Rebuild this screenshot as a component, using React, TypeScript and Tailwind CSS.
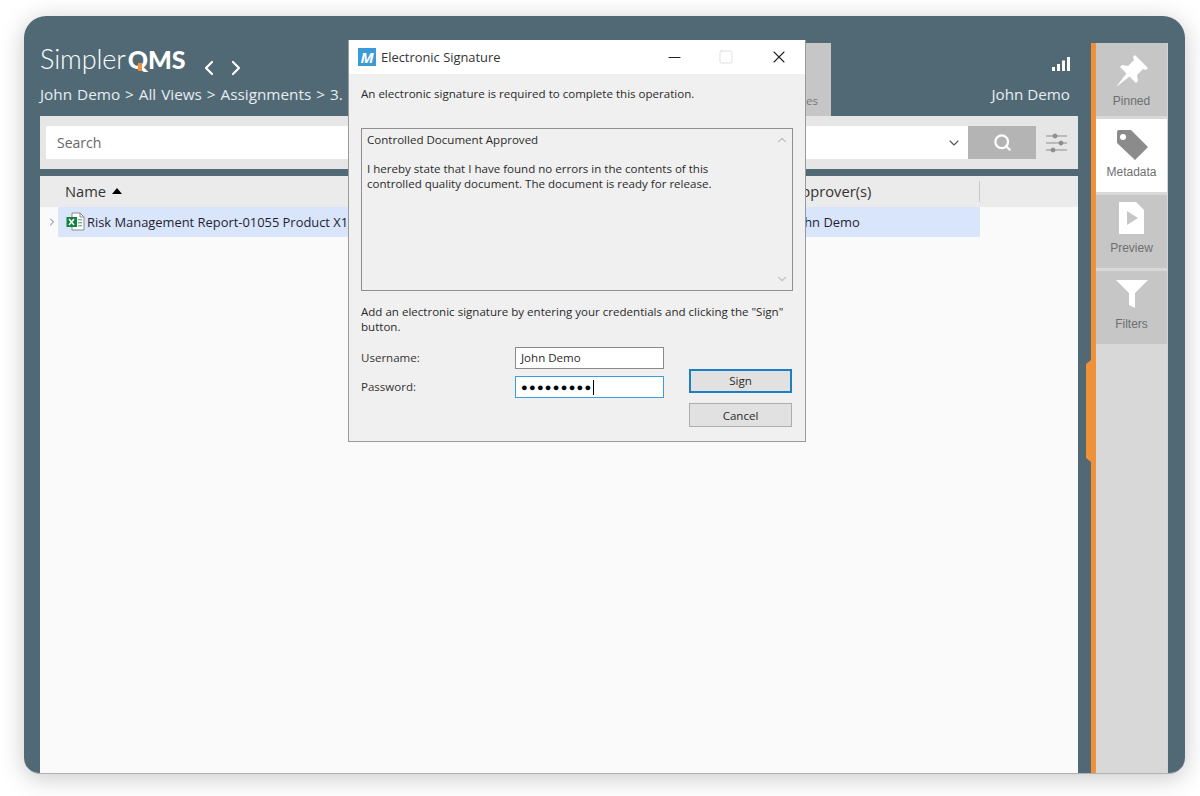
import { ChevronLeft, ChevronRight, ChevronDown, ChevronUp, Search, X, Minus, Square } from 'lucide-react'

const sans = 'font-["Open_Sans",sans-serif]'

function RailItem({ label, active, pinned, children }: { label: string; active?: boolean; pinned?: boolean; children: React.ReactNode }) {
  return (
    <div className={`h-[73px] flex flex-col items-center justify-end shrink-0 ${pinned ? 'pb-[8px]' : 'pb-[13px]'} ${active ? 'bg-white' : 'bg-[#c6c6c6]'}`}>
      <div className="h-[38px] flex items-center justify-center">{children}</div>
      <div className={`text-[12px] leading-[14px] mt-1 text-[#6f6f6f] font-["Liberation_Sans",sans-serif]`}>{label}</div>
    </div>
  )
}

function ExcelIcon() {
  return (
    <svg width="19" height="19" viewBox="0 0 19 19" className="shrink-0">
      <path d="M6 1h8l4 4v13H6z" fill="#fff" stroke="#8b8b8b" />
      <path d="M14 1v4h4" fill="none" stroke="#8b8b8b" />
      <rect x="12" y="7" width="4" height="1.4" fill="#7fb08f" />
      <rect x="12" y="10" width="4" height="1.4" fill="#7fb08f" />
      <rect x="12" y="13" width="4" height="1.4" fill="#7fb08f" />
      <rect x="0.5" y="5" width="10.5" height="10" fill="#14813f" />
      <path d="M3 7l5 6M8 7l-5 6" stroke="#fff" strokeWidth="1.5" />
    </svg>
  )
}

function Dialog() {
  return (
    <div className={`absolute left-[348px] top-[40px] w-[458px] h-[402px] bg-[#f0f0f0] border border-[#9a9a9a] border-t-0 flex flex-col text-[11.55px] leading-[15px] text-[#2a2a2a] ${sans}`}>
      <div className="h-[34px] bg-white flex items-center pl-[9px] shrink-0">
        <div className="w-[18px] h-[18px] bg-[#3a9bd8] flex items-center justify-center text-white font-bold italic text-[15px] leading-none">M</div>
        <div className="ml-[5px] text-[12.9px] text-[#333]">Electronic Signature</div>
        <div className="ml-auto flex items-center">
          <Minus className="w-[19px] h-[19px] text-[#222] mr-[34px]" strokeWidth={1.3} />
          <Square className="w-[16px] h-[16px] text-[#d0d0d0] mr-[35px]" strokeWidth={1} />
          <X className="w-[20px] h-[20px] text-[#222] mr-[16px]" strokeWidth={1.3} />
        </div>
      </div>
      <div className="px-3 pt-[12px] flex flex-col flex-1">
        <div>An electronic signature is required to complete this operation.</div>
        <div className="mt-[27px] h-[163px] border border-[#8f8f8f] flex shrink-0">
          <div className="flex-1 pl-[5px] pt-[3px]">
            <div>Controlled Document Approved</div>
            <div className="mt-[14px] w-[365px]">
              I hereby state that I have found no errors in the contents of this controlled quality document. The document is ready for release.
            </div>
          </div>
          <div className="w-[20px] flex flex-col items-center justify-between py-1 text-[#c4c4c4]">
            <ChevronUp className="w-[14px] h-[14px]" />
            <ChevronDown className="w-[14px] h-[14px]" />
          </div>
        </div>
        <div className="mt-[13px] w-[432px]">
          Add an electronic signature by entering your credentials and clicking the "Sign" button.
        </div>
        <div className="flex mt-[13px]">
          <div className="w-[154px] flex flex-col text-[#333]">
            <div className="h-[22px] pb-[2px] flex items-center">Username:</div>
            <div className="h-[22px] mt-[7px] pb-[2px] flex items-center">Password:</div>
          </div>
          <div className="w-[149px] flex flex-col">
            <div className="h-[22px] bg-white border border-[#8a8a8a] pl-[5px] pb-[2px] flex items-center">John Demo</div>
            <div className="h-[22px] mt-[7px] bg-white border border-[#3f9be0] pl-[5px] flex items-center text-black">
              <span className="text-[11px] font-['Liberation_Sans',sans-serif] tracking-[1.3px]">●●●●●●●●●</span>
              <span className="w-px h-[15px] bg-black" />
            </div>
          </div>
          <div className="ml-[25px] w-[103px] flex flex-col mt-[22px]">
            <div className="h-[24px] pb-[2px] bg-[#e1e1e1] border-2 border-[#1c7fc4] flex items-center justify-center">Sign</div>
            <div className="h-[24px] mt-[10px] bg-[#e1e1e1] border border-[#adadad] flex items-center justify-center">Cancel</div>
          </div>
        </div>
      </div>
    </div>
  )
}

export default function App() {
  return (
    <div className="relative w-[1200px] h-[796px] bg-white overflow-hidden">
      <div className="absolute left-[24px] top-[16px] w-[1161px] h-[758px] rounded-t-[22px] rounded-b-[16px] shadow-[0_4px_24px_rgba(0,0,0,0.22)]" />
      <div className="absolute left-[24px] top-[16px] w-[1161px] h-[758px] rounded-t-[22px] rounded-b-[16px] bg-[#506975] overflow-hidden flex border-b border-[#b0b0b0]">
        <div className={`w-[1067px] pl-[16px] pr-[13px] flex flex-col ${sans}`}>
          <div className="h-[100px] shrink-0 relative text-[#e8edf0]">
            <div className="flex items-center pt-[27px] h-[58px]">
              <div className={`relative text-white text-[27px] leading-[34px] tracking-[-0.1px] font-["Lato",sans-serif] font-light`}>
                Simpler<span className="ml-[2px] text-[25px] font-black">QMS</span>
                <span className="absolute left-[98px] top-[21px] w-[4px] h-[8px] bg-[#ee9138]" />
              </div>
              <ChevronLeft className="ml-[12px] mt-[18px] w-[24px] h-[24px] text-white" strokeWidth={2.2} />
              <ChevronRight className="ml-[3px] mt-[18px] w-[24px] h-[24px] text-white" strokeWidth={2.2} />
            </div>
            <div className="text-[15.3px] leading-[20px] mt-[10px] [word-spacing:1px] whitespace-nowrap">John Demo &gt; All Views &gt; Assignments &gt; 3. .</div>
            <div className="absolute right-[8px] top-[41px] flex flex-col items-end text-[15.2px] leading-[20px]">
              <svg width="18" height="14" viewBox="0 0 18 14" className="mb-[13px]" fill="#fff">
                <rect x="0" y="10" width="3" height="4" />
                <rect x="5" y="7" width="3" height="7" />
                <rect x="10" y="3.5" width="3" height="10.5" />
                <rect x="15" y="0" width="3" height="14" />
              </svg>
              John Demo
            </div>
            <div className="absolute left-[766px] top-[27px] w-[25px] h-[73px] bg-[#c6c6c6] text-[11.5px] text-[#777] flex items-end pb-[7px]">es</div>
          </div>
          <div className="h-[53px] shrink-0 bg-[#e6e6e6] flex items-center pl-[6px]">
            <div className="w-[922px] h-[33px] bg-white flex items-center pl-[11px] pr-[6px] text-[14px] text-[#666]">
              Search
              <ChevronDown className="ml-auto w-[16px] h-[16px] text-[#555]" strokeWidth={1.6} />
            </div>
            <div className="w-[68px] h-[33px] bg-[#b4b4b4] flex items-center justify-center">
              <Search className="w-[19px] h-[19px] text-white" strokeWidth={2.8} />
            </div>
            <svg width="22" height="20" viewBox="0 0 22 20" className="ml-[10px]" stroke="#8d8d8d" fill="#8d8d8d">
              <path d="M0 3h21M0 10h21M0 17h21" strokeWidth="1" />
              <circle cx="9" cy="3" r="2" />
              <circle cx="15" cy="10" r="2" />
              <circle cx="7" cy="17" r="2" />
            </svg>
          </div>
          <div className="h-[7px] shrink-0" />
          <div className="flex-1 bg-[#fafafa] flex flex-col">
            <div className="h-[31px] bg-[#ebebeb] flex items-center shrink-0 text-[14.7px] text-[#333]">
              <div className="w-[752px] pl-[25px] flex items-center">
                Name
                <span className="ml-[6px] w-0 h-0 border-x-[5px] border-x-transparent border-b-[6px] border-b-black" />
              </div>
              <div className="w-[188px] h-[21px] border-r border-[#c9c9c9] flex items-center whitespace-nowrap">Approver(s)</div>
            </div>
            <div className="h-[30px] flex items-center shrink-0">
              <ChevronRight className="ml-[6px] w-[12px] h-[12px] text-[#777]" />
              <div className="w-[922px] h-[30px] bg-[#d9e5fb] flex items-center pl-[8px] text-[12.9px] text-[#1f1f2e]">
                <div className="w-[727px] flex items-center">
                  <ExcelIcon />
                  <span className="ml-[2px] mt-[1px] whitespace-nowrap">Risk Management Report-01055 Product X1</span>
                </div>
                <span className="mt-[1px]">John Demo</span>
              </div>
            </div>
          </div>
        </div>
        <div className="relative w-[5px] mt-[27px] bg-[#ee9138] shrink-0">
          <div className="absolute left-[-5px] top-[317px] w-[5px] h-[102px] bg-[#ee9138] [clip-path:polygon(100%_0,100%_100%,0_96%,0_4%)]" />
        </div>
        <div className="w-[72px] mt-[27px] bg-[#d8d8d8] flex flex-col shrink-0 gap-[3px] border-r border-[#ccd6dc]">
          <RailItem label="Pinned" pinned>
            <svg width="34" height="34" viewBox="0 0 34 34" fill="#fff">
              <path d="M20 1L33 14L31 16L28 15L22 21L23 27L21 29L14.500 22.500L1 33L11.500 19.500L5 13L7 11L13 12L19 6L18 3Z" />
            </svg>
          </RailItem>
          <RailItem label="Metadata" active>
            <svg width="34" height="34" viewBox="0 0 34 34" fill="#8b8b8b" className="mt-[5px]">
              <path fillRule="evenodd" d="M2 4a2 2 0 012-2h12l17 17-13 13L2 15zM8 6a3 3 0 100 6 3 3 0 000-6z" />
            </svg>
          </RailItem>
          <RailItem label="Preview">
            <svg width="26" height="32" viewBox="0 0 26 32">
              <path d="M0 0h17l8 8v24H0z" fill="#fff" />
              <path d="M8 9l11 7-11 7z" fill="#c6c6c6" />
            </svg>
          </RailItem>
          <RailItem label="Filters">
            <svg width="32" height="28" viewBox="0 0 32 28" fill="#fff">
              <path d="M0 0h32L19 13v15l-6-3V13z" />
            </svg>
          </RailItem>
        </div>
      </div>
      <Dialog />
    </div>
  )
}
